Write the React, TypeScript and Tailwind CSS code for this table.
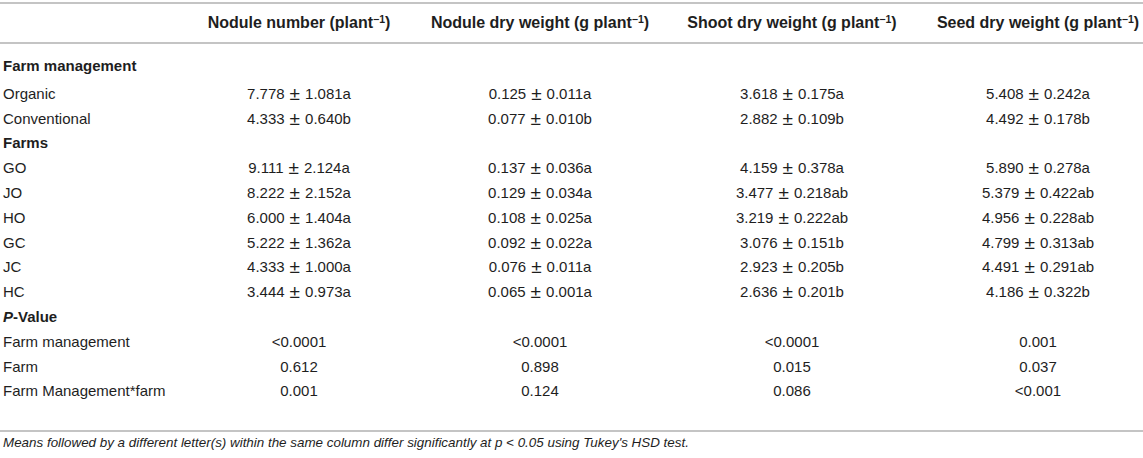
import React from 'react';

type Row = { label: string; values: string[]; section?: boolean; italicP?: boolean };

const rows: Row[] = [
  { label: 'Farm management', values: [], section: true },
  { label: 'Organic', values: ['7.778 ± 1.081a', '0.125 ± 0.011a', '3.618 ± 0.175a', '5.408 ± 0.242a'] },
  { label: 'Conventional', values: ['4.333 ± 0.640b', '0.077 ± 0.010b', '2.882 ± 0.109b', '4.492 ± 0.178b'] },
  { label: 'Farms', values: [], section: true },
  { label: 'GO', values: ['9.111 ± 2.124a', '0.137 ± 0.036a', '4.159 ± 0.378a', '5.890 ± 0.278a'] },
  { label: 'JO', values: ['8.222 ± 2.152a', '0.129 ± 0.034a', '3.477 ± 0.218ab', '5.379 ± 0.422ab'] },
  { label: 'HO', values: ['6.000 ± 1.404a', '0.108 ± 0.025a', '3.219 ± 0.222ab', '4.956 ± 0.228ab'] },
  { label: 'GC', values: ['5.222 ± 1.362a', '0.092 ± 0.022a', '3.076 ± 0.151b', '4.799 ± 0.313ab'] },
  { label: 'JC', values: ['4.333 ± 1.000a', '0.076 ± 0.011a', '2.923 ± 0.205b', '4.491 ± 0.291ab'] },
  { label: 'HC', values: ['3.444 ± 0.973a', '0.065 ± 0.001a', '2.636 ± 0.201b', '4.186 ± 0.322b'] },
  { label: 'P-Value', values: [], section: true, italicP: true },
  { label: 'Farm management', values: ['<0.0001', '<0.0001', '<0.0001', '0.001'] },
  { label: 'Farm', values: ['0.612', '0.898', '0.015', '0.037'] },
  { label: 'Farm Management*farm', values: ['0.001', '0.124', '0.086', '<0.001'] },
];

const headers = ['Nodule number (plant', 'Nodule dry weight (g plant', 'Shoot dry weight (g plant', 'Seed dry weight (g plant'];

const gridCls = 'grid grid-cols-[180px_238px_244px_260px_221px]';

// mean ± sd, with the wider plus-minus sign of the source
function Cell({ v }: { v: string }) {
  const parts = v.split(' ± ');
  if (parts.length < 2) return <>{v}</>;
  return (
    <>
      {parts[0]}
      <span className="inline-block mx-[5px] text-[19px] leading-none align-[-1px]">±</span>
      {parts[1]}
    </>
  );
}

export default function App() {
  return (
    <div
      className="w-[1143px] h-[458px] bg-white text-[#1e1e1e] overflow-hidden"
      style={{ fontFamily: '"Liberation Sans", Arial, Helvetica, sans-serif' }}
    >
      <div className="h-[2px]" />
      <div className="border-t-2 border-b-2 border-[#c4c4c4]">
        <div className={`${gridCls} h-[38px] items-center text-[16px] font-bold`}>
          <div />
          {headers.map((h, i) => (
            <div key={i} className={`text-center whitespace-nowrap ${i === 3 ? 'pl-[11px]' : ''}`}>
              {h}
              <sup className="text-[10.5px] font-bold">−1</sup>)
            </div>
          ))}
        </div>
      </div>

      <div className="pt-[10px] text-[15px]">
        {rows.map((r, idx) => (
          <div
            key={idx}
            className={`${gridCls} items-center ${idx === 0 ? 'h-[24px]' : 'h-[24.8px]'} ${idx === 1 ? 'mt-[3.6px]' : ''}`}
          >
            <div className={`pl-[3px] whitespace-nowrap ${r.section ? 'font-bold' : ''}`}>
              {r.italicP ? (
                <>
                  <span className="italic">P</span>-Value
                </>
              ) : (
                r.label
              )}
            </div>
            {r.values.map((v, i) => (
              <div key={i} className={`text-center whitespace-nowrap ${i === 3 ? 'pl-[11px]' : ''}`}>
                <Cell v={v} />
              </div>
            ))}
          </div>
        ))}
      </div>

      <div className="mt-[26px] border-t-2 border-[#c4c4c4]" />
      <p className="pl-[3px] pt-[2px] text-[13.4px] italic leading-[18px]">
        Means followed by a different letter(s) within the same column differ significantly at p &lt; 0.05 using Tukey's HSD test.
      </p>
    </div>
  );
}
